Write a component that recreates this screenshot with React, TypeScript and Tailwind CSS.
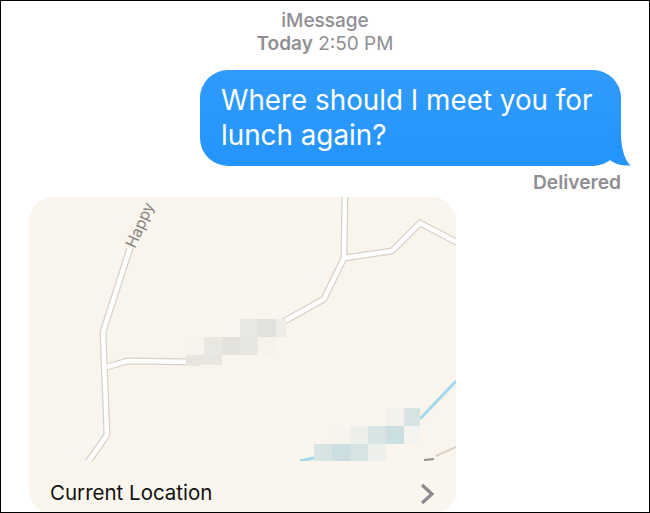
const pixels = [
  { x: 240, y: 319, w: 18, h: 18, c: "#e9e7e2" },
  { x: 258, y: 319, w: 18, h: 18, c: "#e3e1dc" },
  { x: 276, y: 319, w: 10, h: 18, c: "#eeece7" },
  { x: 186, y: 337, w: 18, h: 18, c: "#f6f3ed" },
  { x: 204, y: 337, w: 18, h: 18, c: "#e9e7e2" },
  { x: 222, y: 337, w: 18, h: 18, c: "#e3e2dd" },
  { x: 240, y: 337, w: 18, h: 18, c: "#e8e6e1" },
  { x: 258, y: 337, w: 18, h: 18, c: "#f6f3ed" },
  { x: 186, y: 355, w: 18, h: 10, c: "#e6e5e0" },
  { x: 204, y: 355, w: 18, h: 10, c: "#e6e5e0" },
  { x: 386, y: 408, w: 18, h: 18, c: "#f3f3ec" },
  { x: 404, y: 408, w: 16, h: 18, c: "#d7e4e4" },
  { x: 332, y: 426, w: 18, h: 18, c: "#f7f4ee" },
  { x: 350, y: 426, w: 18, h: 18, c: "#edf0ea" },
  { x: 368, y: 426, w: 18, h: 18, c: "#d7e4e3" },
  { x: 386, y: 426, w: 18, h: 18, c: "#cbdee1" },
  { x: 404, y: 426, w: 16, h: 18, c: "#f3f3ef" },
  { x: 314, y: 444, w: 18, h: 17, c: "#d7e4e4" },
  { x: 332, y: 444, w: 18, h: 17, c: "#cbdee2" },
  { x: 350, y: 444, w: 18, h: 17, c: "#d5e3e3" },
  { x: 368, y: 444, w: 18, h: 17, c: "#edf0ea" },
];

const roads = [
  "M151 190 L130 248 L103 332 L107 435 L88 462",
  "M107 367 L127 361 L200 362",
  "M345 190 L344 258 L324 299 L283 322",
  "M344 258 L392 251 L420 223 L460 244",
];

function MapDrawing() {
  return (
    <svg width="427" height="264" viewBox="29 197 427 264" className="block">
      <rect x="29" y="197" width="427" height="264" fill="#f9f5ed" />
      <path d="M456 381 L420 419" stroke="#a3d9ee" strokeWidth="3" fill="none" />
      <path d="M300 461 L314 458" stroke="#a3d9ee" strokeWidth="3" fill="none" />
      <path d="M436 456 L456 447" stroke="#d9d1c5" strokeWidth="2" fill="none" />
      <path d="M424 460 L434 459" stroke="#8f8f8f" strokeWidth="2" fill="none" />
      {roads.map((d) => (
        <path key={d} d={d} stroke="#d9d1c5" strokeWidth="7" fill="none" />
      ))}
      {roads.map((d) => (
        <path key={d} d={d} stroke="#ffffff" strokeWidth="4.5" fill="none" />
      ))}
      <rect x="122" y="197" width="32" height="51" fill="#f9f5ed" />
      <text
        x="0"
        y="0"
        transform="translate(135 249) rotate(-66)"
        fontSize="15.5"
        fill="#85837f"
        fontFamily="Inter, sans-serif"
      >
        Happy
      </text>
      {pixels.map((p) => (
        <rect key={`${p.x}-${p.y}`} x={p.x} y={p.y} width={p.w} height={p.h} fill={p.c} />
      ))}
    </svg>
  );
}

export default function App() {
  return (
    <div className="w-[650px] h-[513px] overflow-hidden border border-black bg-white font-['Inter',sans-serif] flex flex-col">
      {/* Header */}
      <div className="pt-[8px] text-center text-[19px] leading-[23px] text-[#8e8e93]">
        <div className="font-medium">iMessage</div>
        <div>
          <span className="font-semibold">Today</span> 2:50 PM
        </div>
      </div>

      {/* Sent bubble */}
      <div className="mt-[15px] ml-[199px] relative w-[421px]">
        <div className="h-[96px] rounded-[28px] bg-gradient-to-b from-[#2f9bfb] to-[#2494fe] pl-[21px] pt-[13px] text-[27.8px] leading-[35px] text-white">
          Where should I meet you for
          <br />
          lunch again?
        </div>
        <svg width="27" height="32" viewBox="0 0 27 32" className="absolute right-[-11px] bottom-[-1px]">
          <path d="M5 0 L16 0 C16 12 20 27 26 30.5 C20 31 11 30 5 25 Z" fill="#2595fe" />
        </svg>
      </div>
      <div className="mt-[5px] pr-[28px] text-right text-[19.2px] leading-[22px] font-semibold text-[#8e8e93]">Delivered</div>

      {/* Map card */}
      <div className="mt-[4px] ml-[28px] w-[427px] h-[317px] shrink-0 rounded-[24px] overflow-hidden bg-[#faf6ee]">
        <MapDrawing />
        <div className="h-[53px] pl-[21px] pr-[21px] pt-[12px] flex items-center justify-between">
          <span className="text-[20.5px] text-[#111111]">Current Location</span>
          <svg width="15" height="22" viewBox="0 0 15 22">
            <path d="M2 2 L12 11 L2 20" stroke="#8a8a8f" strokeWidth="3.2" fill="none" />
          </svg>
        </div>
      </div>
    </div>
  );
}
